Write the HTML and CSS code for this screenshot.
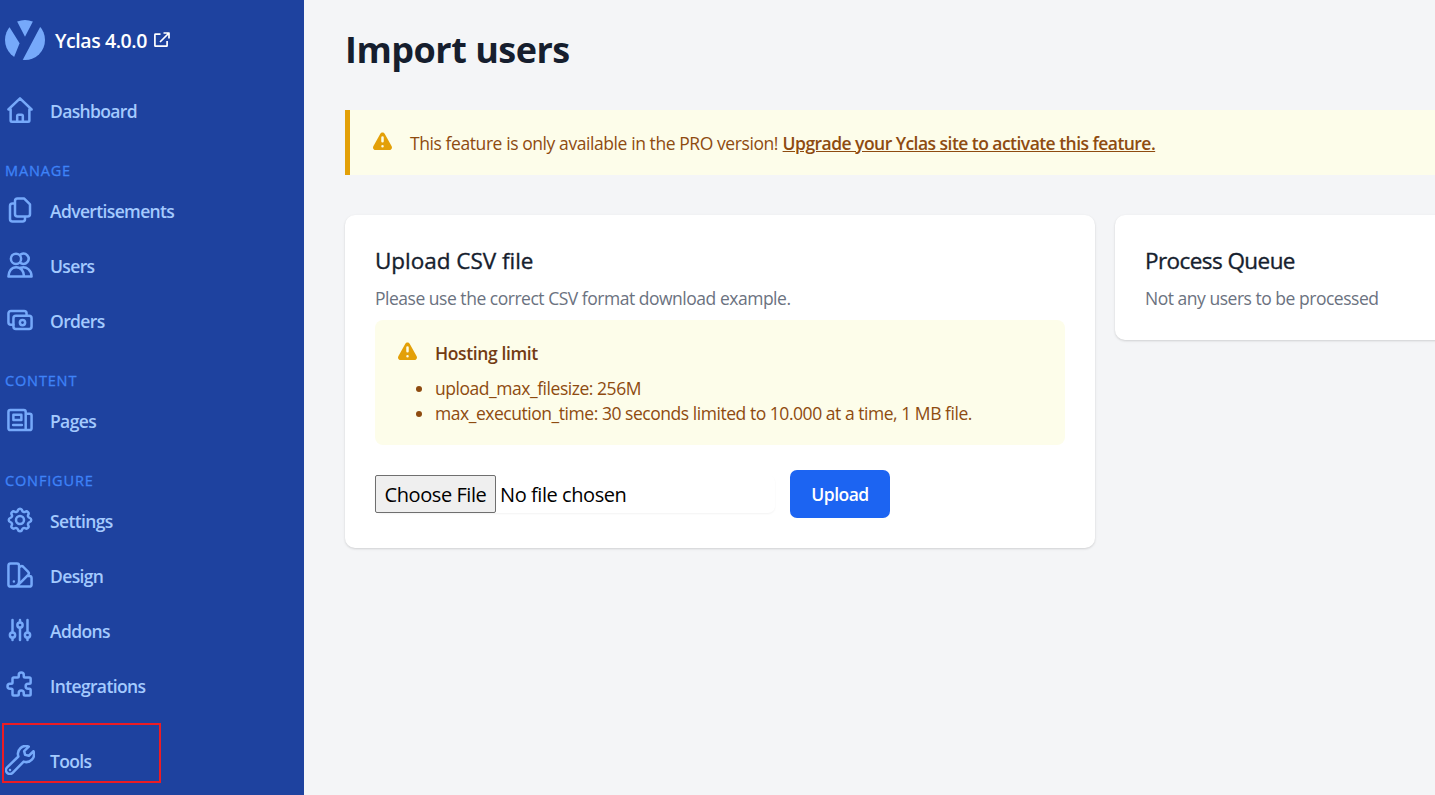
FILE: index.html
```html
<!DOCTYPE html>
<html lang="en">
<head>
<meta charset="utf-8">
<title>Import users</title>
<link rel="stylesheet" href="styles.css">
</head>
<body>
<div class="layout">
  <aside class="sidebar">
    <a class="brand">
      <svg class="logo" viewBox="0 0 40 40"><circle cx="20" cy="20" r="20" fill="#76a9fa"/><path d="M-.2-.3 14.6 23.2 7.5 41 17 41.3 39-.3H28.8L20 16.7 11.2-.3z" fill="#1e429f"/></svg>
      <span class="brand-name">Yclas 4.0.0</span>
      <svg class="external" viewBox="0 0 16 16"><path d="M6.5 2.200H1.500a.6.6 0 0 0-.6.6v10.800a.6.6 0 0 0 .6.6h11a.6.6 0 0 0 .6-.6V9M9.500 1H15v5.500M15 1 6 10"/></svg>
    </a>
    <nav class="nav">
      <a class="item"><svg class="icon" viewBox="0 0 24 24"><path d="M2.700 11.600h1.800v8.700a1 1 0 0 0 1 1h13a1 1 0 0 0 1-1v-8.700h1.800L12 2.750zM9.750 21v-4.250a1 1 0 0 1 1-1h2.500a1 1 0 0 1 1 1V21"/></svg><span>Dashboard</span></a>
      <h2 class="group">Manage</h2>
      <a class="item"><svg class="icon" viewBox="0 0 24 24"><path d="M10 2.750h5.200L20 7.500v7.750a2 2 0 0 1-2 2h-8a2 2 0 0 1-2-2V4.750a2 2 0 0 1 2-2zM8 6.750H6a2 2 0 0 0-2 2v10.500a2 2 0 0 0 2 2h8a2 2 0 0 0 2-2v-2"/></svg><span>Advertisements</span></a>
      <a class="item"><svg class="icon" viewBox="0 0 24 24"><circle cx="8.800" cy="7" r="4.100"/><path d="M12.600 3.500a4.100 4.100 0 1 1 0 7M2.750 21.250c0-4.300 2.600-7.500 6.250-7.500s6.250 3.200 6.250 7.500zM12.500 14.200c4.800-1.400 8.750 2 8.750 7.050h-6"/></svg><span>Users</span></a>
      <a class="item"><svg class="icon" viewBox="0 0 24 24"><rect x="6.750" y="8.500" width="14.500" height="10.750" rx="2"/><path d="M6.700 15.750H4.750a2 2 0 0 1-2-2v-7a2 2 0 0 1 2-2h10.500a2 2 0 0 1 2 2v1.700"/><circle cx="14" cy="14" r="2.100"/></svg><span>Orders</span></a>
      <h2 class="group">Content</h2>
      <a class="item"><svg class="icon" viewBox="0 0 24 24"><path d="M4.250 4h10.800a1.500 1.500 0 0 1 1.500 1.500V20H4.250a1.500 1.500 0 0 1-1.500-1.500v-13A1.500 1.500 0 0 1 4.250 4zM16.600 6.900h3.150a1.500 1.500 0 0 1 1.500 1.500v10.100a1.500 1.500 0 0 1-1.500 1.500H16M6.700 7.750h6.400V12H6.700zM6.500 16h7"/></svg><span>Pages</span></a>
      <h2 class="group">Configure</h2>
      <a class="item"><svg class="icon" viewBox="0 0 24 24"><path d="M10.325 4.317c.426-1.756 2.924-1.756 3.350 0a1.724 1.724 0 0 0 2.573 1.066c1.543-.940 3.310.826 2.370 2.370a1.724 1.724 0 0 0 1.065 2.572c1.756.426 1.756 2.924 0 3.350a1.724 1.724 0 0 0-1.066 2.573c.940 1.543-.826 3.310-2.370 2.370a1.724 1.724 0 0 0-2.572 1.065c-.426 1.756-2.924 1.756-3.350 0a1.724 1.724 0 0 0-2.573-1.066c-1.543.940-3.310-.826-2.370-2.370a1.724 1.724 0 0 0-1.065-2.572c-1.756-.426-1.756-2.924 0-3.350a1.724 1.724 0 0 0 1.066-2.573c-.940-1.543.826-3.310 2.370-2.370.996.608 2.296.070 2.572-1.065z"/><circle cx="12" cy="12" r="3.200"/></svg><span>Settings</span></a>
      <a class="item"><svg class="icon" viewBox="0 0 24 24"><path d="M4.500 2.750h5a1.750 1.750 0 0 1 1.750 1.750v12.750a4.250 4.250 0 0 1-4.250 4H4.500a1.750 1.750 0 0 1-1.750-1.750v-15A1.750 1.750 0 0 1 4.500 2.750zM11.250 5.800l1.300-.7a1.750 1.750 0 0 1 2 .3l4 4.100a1.750 1.750 0 0 1 0 2.400L10 20.500M17.700 12.750h1.800a1.750 1.750 0 0 1 1.750 1.750v5a1.750 1.750 0 0 1-1.750 1.750H7M7.100 17.100v.1"/></svg><span>Design</span></a>
      <a class="item"><svg class="icon" viewBox="0 0 24 24"><path d="M6 4v9.800M6 18.200V20M12 4v1.800M12 10.200V20M18 4v9.800M18 18.200V20"/><circle cx="6" cy="16" r="2.100"/><circle cx="12" cy="8" r="2.100"/><circle cx="18" cy="16" r="2.100"/></svg><span>Addons</span></a>
      <a class="item"><svg class="icon" viewBox="0 0 24 24"><path d="M11 4a2 2 0 1 1 4 0v1a1 1 0 0 0 1 1h3.500a1 1 0 0 1 1 1v3a1 1 0 0 1-1 1h-1a2 2 0 1 0 0 4h1a1 1 0 0 1 1 1v3.400a1 1 0 0 1-1 1H16a1 1 0 0 1-1-1v-1a2 2 0 1 0-4 0v1a1 1 0 0 1-1 1H7a1 1 0 0 1-1-1V16a1 1 0 0 0-1-1H4a2 2 0 1 1 0-4h1a1 1 0 0 0 1-1V7a1 1 0 0 1 1-1h3a1 1 0 0 0 1-1z"/></svg><span>Integrations</span></a>
      <a class="item tools"><svg class="icon" viewBox="0 0 24 24"><path d="M19 1.300a6.300 6.300 0 0 0-8.300 7.900L1.700 17.900a3.050 3.050 0 0 0 4.400 4.400l8.800-9a6.300 6.300 0 0 0 7.900-8.300l-3.700 3.600-3-.700-.8-3zM4 19.950v.1"/></svg><span>Tools</span></a>
    </nav>
  </aside>
  <main class="main">
    <h1 class="title">Import users</h1>
    <div class="banner">
      <svg class="warning" viewBox="0 0 20 20"><path fill-rule="evenodd" d="M8.257 3.099c.765-1.360 2.722-1.360 3.486 0l5.580 9.920c.750 1.334-.213 2.980-1.742 2.980H4.420c-1.530 0-2.493-1.646-1.743-2.980zM11 13a1 1 0 1 1-2 0 1 1 0 0 1 2 0zm-1-8a1 1 0 0 0-1 1v3a1 1 0 0 0 2 0V6a1 1 0 0 0-1-1z"/></svg>
      <p class="banner-text"><span class="notice">This feature is only available in the PRO version!</span> <a class="upgrade">Upgrade your Yclas site to activate this feature.</a></p>
    </div>
    <div class="cards">
      <section class="card">
        <h3 class="card-title">Upload CSV file</h3>
        <p class="card-text">Please use the correct CSV format download example.</p>
        <div class="limits">
          <svg class="warning" viewBox="0 0 20 20"><path fill-rule="evenodd" d="M8.257 3.099c.765-1.360 2.722-1.360 3.486 0l5.580 9.920c.750 1.334-.213 2.980-1.742 2.980H4.420c-1.530 0-2.493-1.646-1.743-2.980zM11 13a1 1 0 1 1-2 0 1 1 0 0 1 2 0zm-1-8a1 1 0 0 0-1 1v3a1 1 0 0 0 2 0V6a1 1 0 0 0-1-1z"/></svg>
          <div>
            <h4 class="limits-title">Hosting limit</h4>
            <ul class="limits-list">
              <li>upload_max_filesize: 256M</li>
              <li>max_execution_time: 30 seconds limited to 10.000 at a time, 1 MB file.</li>
            </ul>
          </div>
        </div>
        <div class="upload-row">
          <div class="file-field"><button class="choose">Choose File</button><span class="file-name">No file chosen</span></div>
          <button class="upload">Upload</button>
        </div>
      </section>
      <section class="card">
        <h3 class="card-title queue-title">Process Queue</h3>
        <p class="card-text">Not any users to be processed</p>
      </section>
    </div>
  </main>
</div>
</body>
</html>
```
FILE: styles.css
```css
* { box-sizing: border-box; margin: 0; padding: 0; }
body { font-family: "Open Sans", "Noto Sans", sans-serif; font-size: 17.5px; background: #f4f5f7; overflow: hidden; }
.layout { display: flex; width: 1435px; height: 795px; overflow: hidden; }
.sidebar { flex: none; width: 304px; background: #1e429f; }
.brand { display: flex; align-items: center; height: 40px; margin: 20px 0 0 5px; color: #fff; }
.logo { width: 40px; height: 40px; }
.brand-name { margin: 1px 7px 0 10px; font-size: 19.5px; font-weight: 600; letter-spacing: -.43px; }
.external { width: 16px; height: 16px; fill: none; stroke: #fff; stroke-width: 1.7; stroke-linejoin: round; }
.nav { display: flex; flex-direction: column; margin-top: 26px; }
.item { position: relative; display: flex; align-items: center; gap: 15px; height: 50px; margin-bottom: 5px; padding-left: 5px; color: #a4cafe; font-weight: 600; letter-spacing: -.64px; }
.icon { flex: none; width: 30px; height: 30px; margin-top: -2px; fill: none; stroke: #76a9fa; stroke-width: 2; stroke-linejoin: round; stroke-linecap: round; }
.group { height: 20px; margin: 20px 0 5px 5px; line-height: 19px; font-size: 14.5px; font-weight: 500; letter-spacing: .85px; text-transform: uppercase; color: #3f83f8; -webkit-text-stroke: .3px #3f83f8; }
.tools { margin-top: 20px; }
.tools::after { content: ""; box-sizing: border-box; position: absolute; left: 2px; top: -13px; width: 159px; height: 60px; border: 2px solid #ec1c24; }
.main { flex: none; width: 1180px; padding: 24px 0 0 41px; }
.title { height: 52px; line-height: 52px; font-size: 36px; font-weight: 700; letter-spacing: -.5px; color: #161e2e; }
.banner { display: flex; height: 65px; margin-top: 34px; padding: 20px; border-left: 5px solid #e3a008; background: #fdfdea; color: #8e4b10; }
.warning { flex: none; width: 25px; height: 25px; fill: #e3a008; }
.banner-text { margin-left: 15px; line-height: 27px; white-space: nowrap; }
.notice { letter-spacing: -.42px; }
.upgrade { font-weight: 600; letter-spacing: -.54px; text-decoration: underline; }
.cards { display: grid; grid-template-columns: 750px 365px; gap: 20px; align-items: start; margin-top: 40px; }
.card { padding: 30px; border-radius: 10px; background: #fff; box-shadow: 0 1px 3px rgba(0,0,0,.1), 0 1px 2px rgba(0,0,0,.06); }
.card-title { height: 30px; line-height: 31px; font-size: 22.5px; font-weight: 500; letter-spacing: -.03px; color: #161e2e; -webkit-text-stroke: .35px #161e2e; }
.queue-title { letter-spacing: -.57px; }
.card-text { height: 25px; margin-top: 10px; line-height: 27px; letter-spacing: -.48px; color: #6b7280; }
.limits { display: flex; gap: 15px; height: 125px; margin-top: 10px; padding: 20px; border-radius: 8px; background: #fdfdea; color: #8e4b10; }
.limits-title { height: 25px; line-height: 27px; font-size: 17.5px; font-weight: 600; letter-spacing: -.38px; color: #723b13; }
.limits-list { margin-top: 11px; line-height: 25px; letter-spacing: -.46px; list-style: disc; }
.upload-row { display: flex; align-items: center; gap: 15px; height: 48px; margin-top: 25px; }
.file-field { display: flex; align-items: center; gap: 4px; width: 400px; height: 38px; border-radius: 7px; box-shadow: 0 1px 2px rgba(0,0,0,.05); font-size: 20px; letter-spacing: -.43px; color: #000; }
.file-name { padding-top: 1px; }
.choose { width: 121px; height: 38px; padding-top: 1px; border: 1px solid #6f6f6f; border-radius: 2px; background: #efefef; font: inherit; letter-spacing: inherit; color: #000; white-space: nowrap; }
.upload { width: 100px; height: 48px; border: 0; border-radius: 7px; background: #1c64f2; color: #fff; font: 600 17.5px "Open Sans", sans-serif; letter-spacing: -.5px; }
```
